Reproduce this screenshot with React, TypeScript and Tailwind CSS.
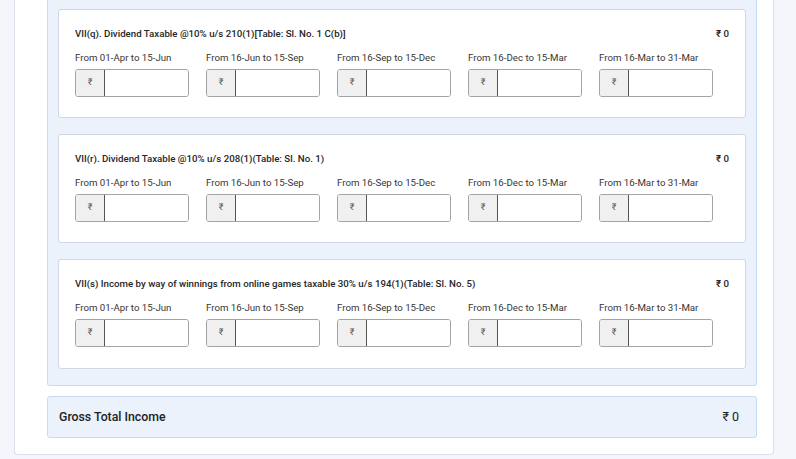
import React from "react";

const periods = [
  "From 01-Apr to 15-Jun",
  "From 16-Jun to 15-Sep",
  "From 16-Sep to 15-Dec",
  "From 16-Dec to 15-Mar",
  "From 16-Mar to 31-Mar",
];

const sections = [
  { title: "VII(q). Dividend Taxable @10% u/s 210(1)[Table: Sl. No. 1 C(b)]", tall: false },
  { title: "VII(r). Dividend Taxable @10% u/s 208(1)(Table: Sl. No. 1)", tall: false },
  {
    title: "VII(s) Income by way of winnings from online games taxable 30% u/s 194(1)(Table: Sl. No. 5)",
    tall: true,
  },
];

function RupeeInput() {
  return (
    <div className="flex h-[28px] w-[114px] overflow-hidden rounded-[3px] border border-[#a3a3a3] bg-white">
      <div className="flex w-[29px] items-center justify-center border-r border-[#555] bg-[#f0f0f0] text-[9px] text-[#555]">
        ₹
      </div>
      <input className="min-w-0 flex-1 bg-white outline-none" />
    </div>
  );
}

function SectionCard({ title, tall }: { title: string; tall: boolean }) {
  return (
    <div
      className={
        tall
          ? "rounded-[3px] border border-[#d2d6e6] bg-white px-[16px] pt-[17px] pb-[21px]"
          : "rounded-[3px] border border-[#d2d6e6] bg-white px-[16px] pt-[17px] pb-[20px]"
      }
    >
      <div className="flex items-center justify-between text-[9.7px] font-medium leading-[14px] text-[#262626]">
        <span>{title}</span>
        <span>₹ 0</span>
      </div>
      <div className="mt-[10px] flex gap-[17px]">
        {periods.map((p) => (
          <div key={p} className="flex flex-col">
            <span className="text-[9.7px] leading-[14px] text-[#363636]">{p}</span>
            <div className="mt-[4px]">
              <RupeeInput />
            </div>
          </div>
        ))}
      </div>
    </div>
  );
}

export default function App() {
  return (
    <div
      className="h-[459px] w-[796px] overflow-hidden bg-[#f4f6fb] pl-[14px]"
      style={{ fontFamily: "Roboto, 'Noto Sans', sans-serif" }}
    >
      <div className="w-[760px] rounded-b-[4px] border border-t-0 border-[#dcdfec] bg-white pb-[16px]">
        <div className="ml-[32px] mr-[16px] rounded-b-[3px] border border-t-0 border-[#c7dcf3] bg-[#ebf2fc] px-[10px] pt-[9px] pb-[16px]">
          <div className="flex flex-col gap-[16px]">
            {sections.map((s) => (
              <SectionCard key={s.title} title={s.title} tall={s.tall} />
            ))}
          </div>
        </div>
        <div className="mt-[10px] ml-[32px] mr-[16px] flex h-[42px] items-center justify-between rounded-[3px] border border-[#c7dcf3] bg-[#ebf2fc] pl-[11px] pr-[17px]">
          <span className="text-[12.3px] font-medium text-[#222]">Gross Total Income</span>
          <span className="text-[12.5px] text-[#222]">₹ 0</span>
        </div>
      </div>
    </div>
  );
}
